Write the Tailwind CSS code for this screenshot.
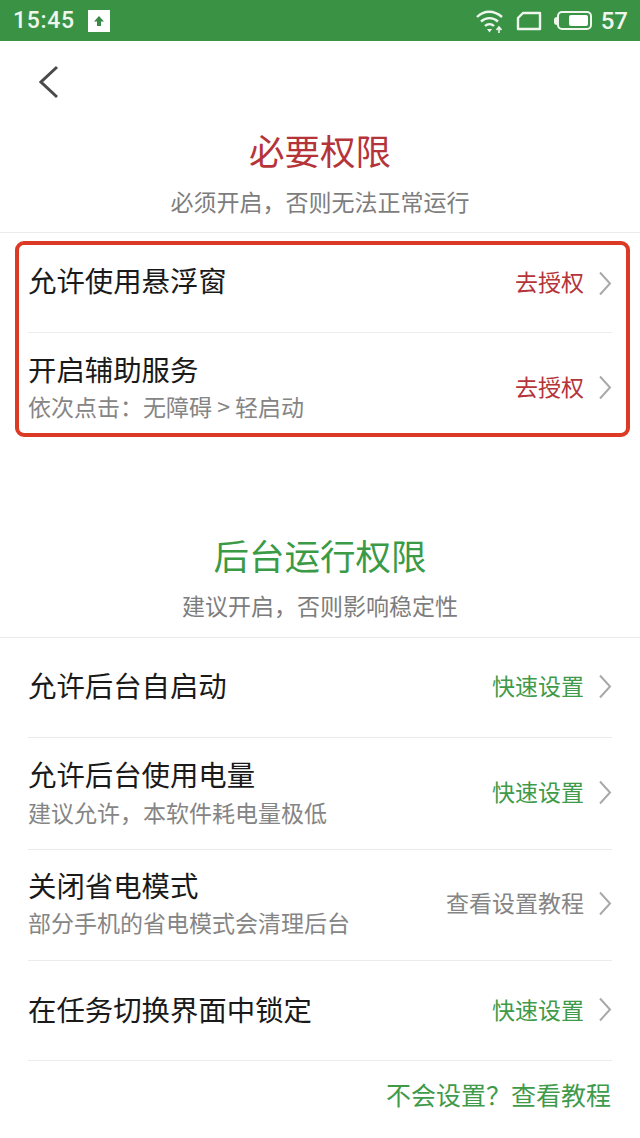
<!DOCTYPE html>
<html lang="zh-CN">
<head>
  <meta charset="UTF-8" />
  <meta name="viewport" content="width=device-width, initial-scale=1.0"/>
  <title>权限设置</title>
  <script src="https://cdn.jsdelivr.net/npm/@tailwindcss/browser@4"></script>
</head>
<body class="bg-white w-[640px] h-[1138px] overflow-hidden font-['Noto_Sans_CJK_SC','Noto_Sans',sans-serif]">
  <!-- status bar -->
  <div class="h-[41px] bg-[#3a9345] flex items-center pl-[13px] pr-[12px] text-[#eef6ee]">
    <span class="text-[23px] leading-none font-medium font-['Roboto',sans-serif] tracking-[0.7px]">15:45</span>
    <div class="ml-[13px] w-[22px] h-[22px] bg-white flex items-center justify-center">
      <svg width="12" height="12" viewBox="0 0 12 12"><path d="M6 1 L11 6.5 H8 V11 H4 V6.5 H1 Z" fill="#3a8a45"/></svg>
    </div>
    <div class="ml-auto flex items-center">
      <svg width="30" height="26" viewBox="0 0 30 26" fill="none" stroke="#eef6ee" stroke-width="2.4">
        <path d="M2 9 C9 2 19 2 27 9"/>
        <path d="M6 13.5 C11 9 18 9 23 13.5"/>
        <path d="M10 18 C12.5 15.5 16.5 15.5 19 18"/>
        <path d="M12 21 L14.5 24.5 L17 21 Z" fill="#eef6ee" stroke="none"/>
        <path d="M24 25 V20 M21.5 22 L24 19 L26.5 22" stroke-width="1.6"/>
      </svg>
      <svg class="ml-[11px]" width="26" height="20" viewBox="0 0 26 20" fill="none" stroke="#eef6ee" stroke-width="2.4">
        <path d="M7 2 H24 V18 H2 V7 Z" stroke-linejoin="round"/>
      </svg>
      <div class="ml-[12px] flex items-center">
        <div class="w-[3px] h-[8px] bg-[#eef6ee] rounded-l-sm"></div>
        <div class="w-[35px] h-[19px] border-2 border-[#eef6ee] rounded-[5px] flex justify-end p-[2px]">
          <div class="w-[19px] bg-white rounded-[2px]"></div>
        </div>
      </div>
      <span class="ml-[9px] text-[24px] leading-none font-medium font-['Roboto',sans-serif]">57</span>
    </div>
  </div>

  <!-- back -->
  <div class="h-[73px] pl-[39px] pt-[24px]">
    <svg width="20" height="34" viewBox="0 0 20 34" fill="none" stroke="#4a4a4a" stroke-width="3">
      <path d="M18 2 L2 17 L18 32"/>
    </svg>
  </div>

  <!-- required -->
  <div class="h-[119px] border-b border-[#ececec] text-center">
    <h1 class="pt-[14px] text-[35.5px] leading-[44px] text-[#b5343a]">必要权限</h1>
    <p class="mt-[14px] text-[23px] leading-[30px] text-[#7d7d7d]">必须开启，否则无法正常运行</p>
  </div>

  <div class="mt-[8px] ml-[15px] mr-[10px] h-[196px] border-[4px] border-[#dd3a26] rounded-[9px] pl-[9px] pr-[14px]">
    <div class="h-[88px] border-b border-[#ededed] flex items-start justify-between">
      <div class="pt-[14px] text-[28.4px] leading-[42px] text-[#1a1a1a]">允许使用悬浮窗</div>
      <div class="pt-[19px] flex items-center gap-[14px]">
        <span class="text-[23px] leading-[34px] text-[#b5343a]">去授权</span>
        <svg class="mt-[4px]" width="14" height="25" viewBox="0 0 14 25" fill="none" stroke="#a9a9a9" stroke-width="2"><path d="M2 1.5 L12 12.5 L2 23.5"/></svg>
      </div>
    </div>
    <div class="flex justify-between">
      <div>
        <div class="pt-[15px] text-[28.4px] leading-[42px] text-[#1a1a1a]">开启辅助服务</div>
        <div class="text-[23px] leading-[32px] text-[#858585]">依次点击：无障碍 &gt; 轻启动</div>
      </div>
      <div class="pt-[36px] flex items-start gap-[14px]">
        <span class="text-[23px] leading-[34px] text-[#b5343a]">去授权</span>
        <svg class="mt-[6px]" width="14" height="25" viewBox="0 0 14 25" fill="none" stroke="#a9a9a9" stroke-width="2"><path d="M2 1.5 L12 12.5 L2 23.5"/></svg>
      </div>
    </div>
  </div>

  <!-- background -->
  <div class="mt-[96px] h-[105px] border-b border-[#ececec] text-center">
    <h2 class="text-[35.5px] leading-[44px] text-[#3a9a45]">后台运行权限</h2>
    <p class="mt-[13px] text-[23px] leading-[30px] text-[#7d7d7d]">建议开启，否则影响稳定性</p>
  </div>

  <div class="mx-[28px]">
    <div class="h-[100px] border-b border-[#ececec] flex items-center justify-between pb-[6px]">
      <div class="text-[28.4px] leading-[42px] text-[#1a1a1a]">允许后台自启动</div>
      <div class="flex items-center gap-[14px]">
        <span class="text-[23px] leading-[34px] text-[#3f9a4a]">快速设置</span>
        <svg class="mt-[4px]" width="14" height="25" viewBox="0 0 14 25" fill="none" stroke="#a9a9a9" stroke-width="2"><path d="M2 1.5 L12 12.5 L2 23.5"/></svg>
      </div>
    </div>
    <div class="h-[112px] border-b border-[#ececec] flex justify-between">
      <div class="pt-[15px]">
        <div class="text-[28.4px] leading-[42px] text-[#1a1a1a]">允许后台使用电量</div>
        <div class="text-[23px] leading-[34px] text-[#858585]">建议允许，本软件耗电量极低</div>
      </div>
      <div class="pt-[36px] flex items-start gap-[14px]">
        <span class="text-[23px] leading-[34px] text-[#3f9a4a]">快速设置</span>
        <svg class="mt-[6px]" width="14" height="25" viewBox="0 0 14 25" fill="none" stroke="#a9a9a9" stroke-width="2"><path d="M2 1.5 L12 12.5 L2 23.5"/></svg>
      </div>
    </div>
    <div class="h-[111px] border-b border-[#ececec] flex justify-between">
      <div class="pt-[14px]">
        <div class="text-[28.4px] leading-[42px] text-[#1a1a1a]">关闭省电模式</div>
        <div class="text-[23px] leading-[32px] text-[#858585]">部分手机的省电模式会清理后台</div>
      </div>
      <div class="pt-[35px] flex items-start gap-[14px]">
        <span class="text-[23px] leading-[34px] text-[#858585]">查看设置教程</span>
        <svg class="mt-[6px]" width="14" height="25" viewBox="0 0 14 25" fill="none" stroke="#a9a9a9" stroke-width="2"><path d="M2 1.5 L12 12.5 L2 23.5"/></svg>
      </div>
    </div>
    <div class="h-[100px] border-b border-[#ececec] flex items-center justify-between pb-[4px]">
      <div class="text-[28.4px] leading-[42px] text-[#1a1a1a]">在任务切换界面中锁定</div>
      <div class="flex items-center gap-[14px]">
        <span class="text-[23px] leading-[34px] text-[#3f9a4a]">快速设置</span>
        <svg class="mt-[2px]" width="14" height="25" viewBox="0 0 14 25" fill="none" stroke="#a9a9a9" stroke-width="2"><path d="M2 1.5 L12 12.5 L2 23.5"/></svg>
      </div>
    </div>
    <div class="pt-[15px] pr-px text-right text-[25px] leading-[36px] text-[#3f9a4a]">不会设置？查看教程</div>
  </div>
</body>
</html>
